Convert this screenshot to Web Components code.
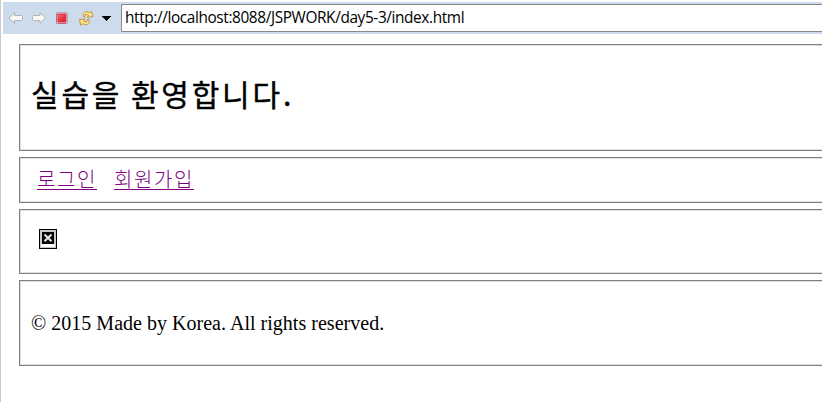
<!DOCTYPE html>
<html lang="ko"><head><meta charset="utf-8"><title>index</title>
<style>html,body{margin:0;height:100%;overflow:hidden;background:#fff}</style></head>
<body><browser-view></browser-view>
<script>
const define = (name, html) => customElements.define(name, class extends HTMLElement {
  constructor() { super(); this.attachShadow({mode: 'open'}).innerHTML = html; }
});
define('browser-toolbar', `<style>
:host{display:flex;box-sizing:border-box;height:32px;background:#cddcec;padding:2px 0 2px 5px}
svg{flex:none;width:113px;height:28px}
.addr{flex:1;box-sizing:border-box;height:28px;border:1px solid #888;border-right:0;border-radius:2px 0 0 2px;background:#fff;padding-left:3px;
font:15.4px/26px "Open Sans","Noto Sans",sans-serif;letter-spacing:-.39px;color:#000;white-space:nowrap}
</style>
<svg viewBox="8 4 113 28">
<defs><linearGradient id="r" x2="1" y2="1"><stop stop-color="#f4767e"/><stop offset=".5" stop-color="#e63a45"/><stop offset="1" stop-color="#d9202d"/></linearGradient></defs>
<g fill="#f8f8f6" stroke="#b3b3b0" stroke-linejoin="round">
<path d="M9 18 14.5 12.700V15.500H21.500Q22.500 15.500 22.500 16.500V19.500Q22.500 20.500 21.500 20.500H14.500V23.300Z"/>
<path d="M45.500 18 40 12.700V15.500H33.500Q32.500 15.500 32.500 16.500V19.500Q32.500 20.500 33.500 20.500H40V23.300Z"/></g>
<rect x="56.500" y="13" width="10.500" height="10.500" rx="1" fill="#f4c6ca" stroke="#b9677a"/>
<rect x="58" y="14.500" width="7.500" height="7.500" fill="url(#r)" stroke="#d72735" stroke-width=".8"/>
<g fill="#ffe28a" stroke="#c38a2c" stroke-width=".9" stroke-linejoin="round">
<path d="M83.500 16.500C82.300 12.500 86 10.500 89.500 12.700L91.500 11.300 93 16.600 87.300 17.500 88.700 15.500C86.500 13.500 84.600 14.600 85.500 16.200Z"/>
<path d="M89 19.500C90.500 23.500 86.500 26.300 82.700 23.600L80.700 25.200 79.500 19.500 85 18.900 83.700 21.100C86 22.700 88 21.500 87 19.800Z"/></g>
<path d="M102 16H111V17H110V18H109V19H108V20H107V21H106V20H105V19H104V18H103V17H102Z"/>
</svg><div class="addr"><slot></slot></div>`);
define('page-section', `<style>:host{display:block;box-sizing:border-box;border:1px solid #808080;border-right:0;box-shadow:inset 1px 1px #dedede,inset 0 -1px #dedede;overflow:hidden}</style><slot></slot>`);
define('missing-image', `<style>:host,svg{display:block;width:18px;height:20px}</style>
<svg viewBox="0 0 18 20"><path d="M0 0H18V20H0Z"/><path fill="#c7c7c7" d="M1 1H17V19H1Z"/><path fill="#fff" d="M2 15H16V18H2Z"/><path d="M3 3H15V15H3Z"/><path d="M5.500 5.500 12.500 12.300M12.500 5.500 5.500 12.300" stroke="#e0e0e0" stroke-width="2.200"/></svg>`);
define('browser-view', `<style>
:host{display:block;box-sizing:border-box;height:402px;border-left:1px solid #c8c8c8;padding:2px 0 0 2px}
main{display:grid;grid-template-rows:107px 46px 65px 86px;gap:6px;padding:10px 0 0 16px}
h1{margin:0;padding:27px 0 0 11px;font:400 30px/42px "Noto Sans CJK KR",sans-serif;letter-spacing:2.800px;word-spacing:-2.500px;-webkit-text-stroke:.4px #000;white-space:nowrap}
nav{display:flex;gap:17px;padding:7px 0 0 17px}
a{font:300 20px/27px "Noto Sans CJK KR",sans-serif;letter-spacing:1.600px;color:#800080;height:25px;box-sizing:border-box;border-bottom:1px solid #800080;white-space:nowrap}
missing-image{margin:19px 0 0 19px}
p{margin:0;padding:30px 0 0 11px;font:20px/24px "Liberation Serif",serif;letter-spacing:.02px}
</style>
<browser-toolbar>http://localhost:8088/JSPWORK/day5-3/index.html</browser-toolbar>
<main>
<page-section><h1>실습을 환영합니다.</h1></page-section>
<page-section><nav><a>로그인</a><a>회원가입</a></nav></page-section>
<page-section><missing-image></missing-image></page-section>
<page-section><p>© 2015 Made by Korea. All rights reserved.</p></page-section>
</main>`);
</script></body></html>
